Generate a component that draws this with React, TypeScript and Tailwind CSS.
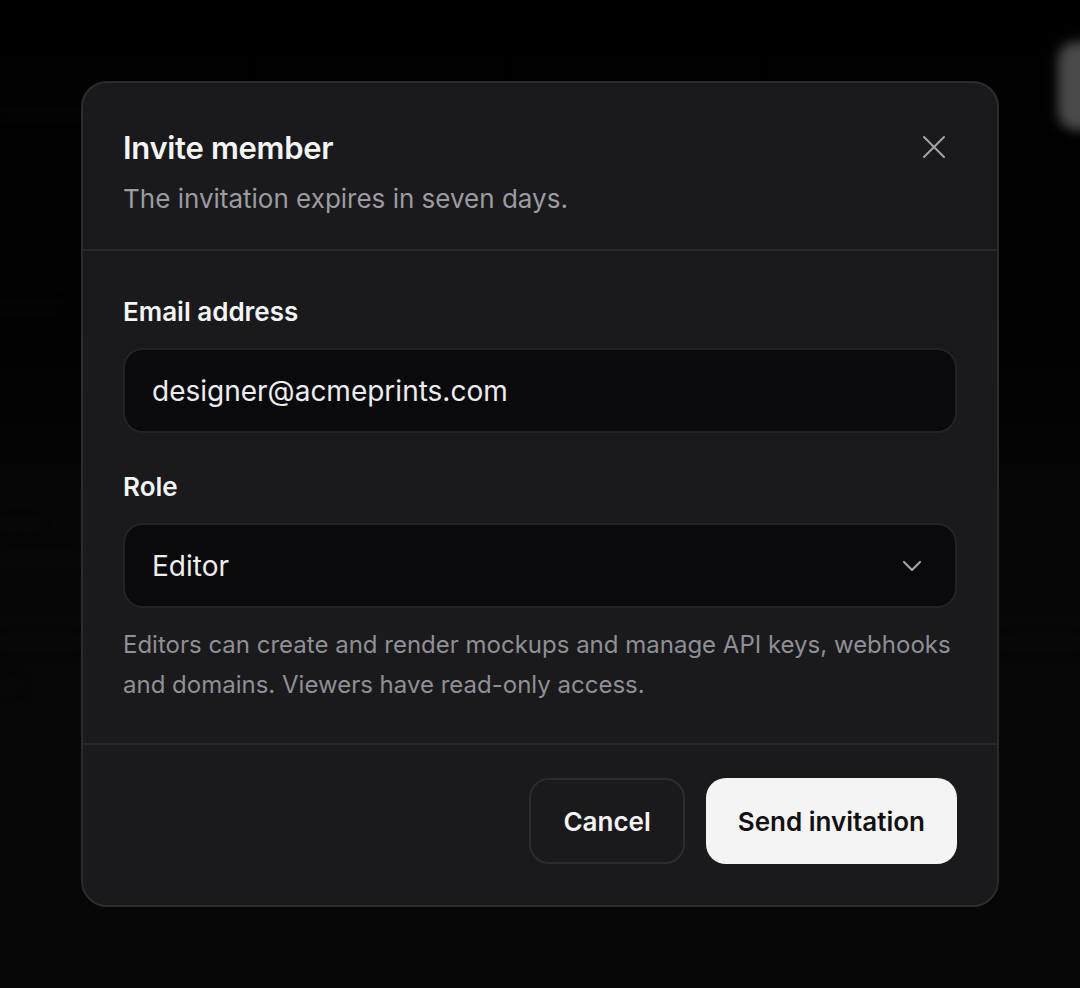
import { useState } from "react";

function CloseIcon() {
  return (
    <svg width="30" height="30" viewBox="0 0 24 24" fill="none" stroke="currentColor" strokeWidth="1.6" strokeLinecap="round">
      <path d="M4 4l16 16M20 4L4 20" />
    </svg>
  );
}

function ChevronDown() {
  return (
    <svg width="32" height="32" viewBox="0 0 24 24" fill="none" stroke="currentColor" strokeWidth="1.6" strokeLinecap="round" strokeLinejoin="round">
      <path d="m6 9 6 6 6-6" />
    </svg>
  );
}

// faint, blurred page behind the dialog
function Backdrop() {
  return (
    <div className="flex flex-col h-full blur-[6px]">
      <div className="flex justify-end pt-[42px]">
        <div className="w-[60px] h-[88px] rounded-[18px] bg-[#4a4a4a] -mr-[38px]" />
      </div>
      <div className="h-[3px] w-[90px] bg-[#111111] mt-[-18px]" />
      <div className="h-[3px] w-[60px] bg-[#101010] mt-[190px]" />
      <div className="h-[3px] w-[40px] bg-[#0e0e0e] mt-[215px]" />
      <div className="h-[3px] w-[80px] bg-[#0e0e0e] mt-[30px]" />
      <div className="flex justify-between mt-[82px]">
        <div className="h-[3px] w-[80px] bg-[#101010]" />
        <div className="h-[3px] w-[80px] bg-[#101010]" />
      </div>
      <div className="h-[3px] w-[20px] bg-[#0e0e0e] mt-[40px]" />
    </div>
  );
}

export default function App() {
  const [email, setEmail] = useState("designer@acmeprints.com");
  const [role, setRole] = useState("Editor");

  return (
    <div
      className="relative w-[1080px] h-[988px] overflow-hidden bg-[#050505] text-[#f2f2f3]"
      style={{ fontFamily: "Inter, 'Noto Sans', sans-serif" }}
    >
      <div className="absolute inset-0 bg-gradient-to-b from-black via-[#060606] to-[#070707]">
        <Backdrop />
      </div>

      <div className="absolute left-[81px] top-[81px] w-[918px] rounded-[26px] border-2 border-[#2c2c2f] bg-[#1a1a1c]">
        <div className="flex items-start justify-between pl-[40px] pr-[48px] pt-[45px] pb-[32px] border-b-2 border-[#28282b]">
          <div className="flex flex-col">
            <h2 className="text-[31px] leading-[40px] font-semibold tracking-[-0.01em] text-[#f4f4f5]">Invite member</h2>
            <p className="text-[26px] leading-[36px] text-[#9b9ba1] mt-[13px]">The invitation expires in seven days.</p>
          </div>
          <button className="text-[#a3a3a8] mt-[4px]">
            <CloseIcon />
          </button>
        </div>

        <div className="flex flex-col px-[40px] pt-[43px] pb-[38px] border-b-2 border-[#28282b]">
          <label className="text-[26px] leading-[36px] font-semibold text-[#f4f4f5]">Email address</label>
          <input
            value={email}
            onChange={(e) => setEmail(e.target.value)}
            className="mt-[18px] h-[85px] rounded-[20px] border-2 border-[#232326] bg-[#0a0a0c] px-[27px] text-[28px] text-[#ededee] outline-none"
          />

          <label className="mt-[36px] text-[26px] leading-[36px] font-semibold text-[#f4f4f5]">Role</label>
          <div className="relative mt-[18px]">
            <select
              value={role}
              onChange={(e) => setRole(e.target.value)}
              className="w-full h-[85px] appearance-none rounded-[20px] border-2 border-[#232326] bg-[#0a0a0c] px-[27px] text-[28px] text-[#ededee] outline-none"
            >
              <option>Editor</option>
              <option>Viewer</option>
            </select>
            <span className="pointer-events-none absolute right-[29px] top-1/2 -translate-y-1/2 text-[#a3a3a8]">
              <ChevronDown />
            </span>
          </div>

          <p className="mt-[17px] text-[24px] leading-[40px] text-[#8f8f96]">
            Editors can create and render mockups and manage API keys, webhooks and domains. Viewers have read-only access.
          </p>
        </div>

        <div className="flex justify-end gap-[21px] px-[40px] pt-[33px] pb-[41px]">
          <button className="h-[86px] px-[32px] rounded-[20px] border-2 border-[#2c2c2f] text-[26px] font-semibold text-[#f4f4f5]">
            Cancel
          </button>
          <button className="h-[86px] px-[32px] rounded-[20px] bg-[#f4f4f4] text-[26px] font-semibold text-[#111113]">
            Send invitation
          </button>
        </div>
      </div>
    </div>
  );
}
